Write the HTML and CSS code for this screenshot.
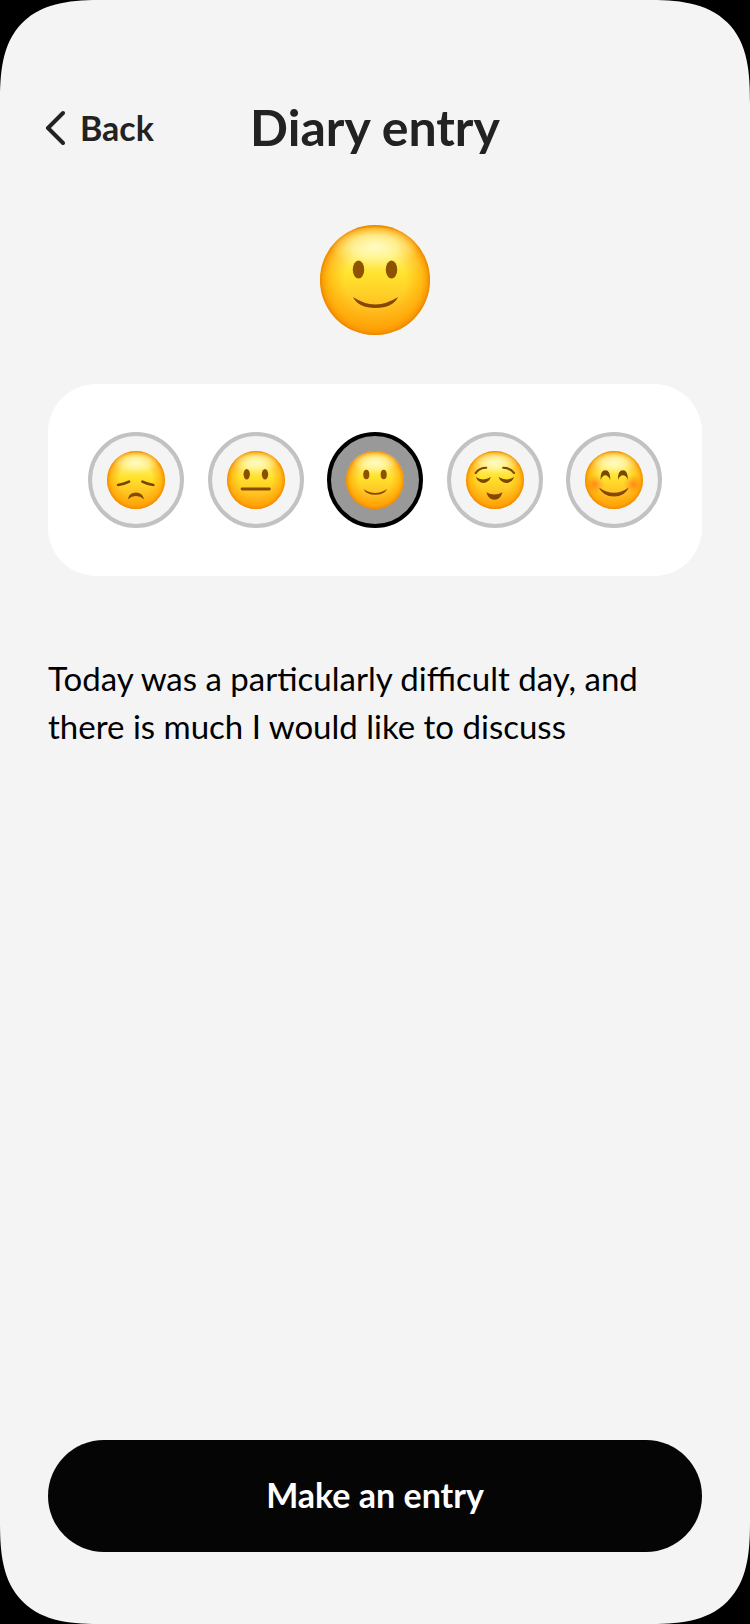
FILE: index.html
```
<!DOCTYPE html>
<html lang="en">
<head>
    <meta charset="UTF-8">
    <meta name="viewport" content="width=device-width, initial-scale=1.0">
    <title>Diary entry</title>
    <link rel="stylesheet" href="styles.css">
</head>
<body>
    <!-- Shared emoji shapes -->
    <svg class="sprite" aria-hidden="true">
        <defs>
            <linearGradient id="skin" x1="0" y1="0" x2="0" y2="1">
                <stop offset="0" stop-color="#ffe45c"/>
                <stop offset="0.12" stop-color="#fff6a0"/>
                <stop offset="0.45" stop-color="#ffe32e"/>
                <stop offset="0.75" stop-color="#ffc022"/>
                <stop offset="1" stop-color="#ffa010"/>
            </linearGradient>
            <radialGradient id="rim">
                <stop offset="0.55" stop-color="#ffa800" stop-opacity="0"/>
                <stop offset="0.85" stop-color="#ffa400" stop-opacity="0.6"/>
                <stop offset="0.95" stop-color="#f99400" stop-opacity="0.85"/>
                <stop offset="1" stop-color="#e88400" stop-opacity="1"/>
            </radialGradient>
            <radialGradient id="shine" cx="0.5" cy="0.45" r="0.5">
                <stop offset="0" stop-color="#fffbc8" stop-opacity="0.95"/>
                <stop offset="0.5" stop-color="#fff9a8" stop-opacity="0.7"/>
                <stop offset="1" stop-color="#fff27a" stop-opacity="0"/>
            </radialGradient>
            <radialGradient id="blush">
                <stop offset="0" stop-color="#ff6a14" stop-opacity="0.65"/>
                <stop offset="1" stop-color="#ff7a14" stop-opacity="0"/>
            </radialGradient>
            <g id="face">
                <circle cx="50" cy="50" r="50" fill="url(#skin)"/>
                <circle cx="50" cy="50" r="50" fill="url(#rim)"/>
                <ellipse cx="50" cy="22" rx="40" ry="20" fill="url(#shine)"/>
            </g>
            <symbol id="smile" viewBox="0 0 100 100">
                <use href="#face"/>
                <g fill="#8f5200">
                    <ellipse cx="35" cy="40.5" rx="5.2" ry="8.2"/>
                    <ellipse cx="65" cy="40.5" rx="5.2" ry="8.2"/>
                </g>
                <path d="M30 65.5Q50 79 71 65.5Q66 75.500 50.500 75.500Q35 75.500 30 65.500Z" fill="#864700"/>
            </symbol>
            <symbol id="sad" viewBox="0 0 100 100">
                <use href="#face"/>
                <path d="M19 58.500Q31 57 38 53M61 53Q68 57 80 58.500" fill="none" stroke="#7a4700" stroke-width="4.500" stroke-linecap="round"/>
                <path d="M36 83Q38 71.500 50 71.500Q61 71.500 64 83Q57 77.500 50 77.500T36 83Z" fill="#864700"/>
            </symbol>
            <symbol id="neutral" viewBox="0 0 100 100">
                <use href="#face"/>
                <g fill="#8a5200">
                    <ellipse cx="34" cy="40" rx="5.500" ry="9"/>
                    <ellipse cx="65.500" cy="40" rx="5.500" ry="9"/>
                </g>
                <path d="M26 65.500H73" stroke="#8a4c00" stroke-width="5" stroke-linecap="round"/>
            </symbol>
            <symbol id="relieved" viewBox="0 0 100 100">
                <use href="#face"/>
                <path d="M16.500 38Q23 29 35 29M64 29Q76 29 83 38" fill="none" stroke="#7a4700" stroke-width="3.500" stroke-linecap="round"/>
                <path d="M17 45Q29 53 43 45Q39 55 30 55Q21 55 17 45ZM56 45Q70 53 83 45Q79 55 70 55Q60 55 56 45Z" fill="#7a4700"/>
                <path d="M35 71Q49 79 63 71Q59 84 49 84Q39 84 35 71Z" fill="#864700"/>
            </symbol>
            <symbol id="happy" viewBox="0 0 100 100">
                <use href="#face"/>
                <circle cx="17" cy="57" r="17" fill="url(#blush)"/>
                <circle cx="83" cy="57" r="17" fill="url(#blush)"/>
                <path d="M27 50Q26 33 35 33Q44 33 43.500 50Q40 42 35 42Q30 42 27 50ZM57 50Q56 33 65.500 33Q74 33 74 50Q71 42 65.500 42Q60 42 57 50Z" fill="#7a4700"/>
                <path d="M24 63Q50 81 75.500 63Q69 78.500 50 78.500Q31 78.500 24 63Z" fill="#864700"/>
            </symbol>
        </defs>
    </svg>

    <div class="screen">
        <header class="header">
            <a class="back" href="#">
                <svg class="back-icon" viewBox="0 0 20 36" aria-hidden="true">
                    <path d="M18 3L3 18L18 33"/>
                </svg>
                Back
            </a>
            <h1>Diary entry</h1>
        </header>

        <form class="entry">
            <svg class="current-mood" role="img" aria-label="Slightly smiling"><use href="#smile"/></svg>

            <div class="moods" role="radiogroup" aria-label="Mood">
                <label class="mood">
                    <input type="radio" name="mood" value="sad" aria-label="Sad">
                    <svg><use href="#sad"/></svg>
                </label>
                <label class="mood">
                    <input type="radio" name="mood" value="neutral" aria-label="Neutral">
                    <svg><use href="#neutral"/></svg>
                </label>
                <label class="mood">
                    <input type="radio" name="mood" value="smile" aria-label="Good" checked>
                    <svg><use href="#smile"/></svg>
                </label>
                <label class="mood">
                    <input type="radio" name="mood" value="relieved" aria-label="Relieved">
                    <svg><use href="#relieved"/></svg>
                </label>
                <label class="mood">
                    <input type="radio" name="mood" value="happy" aria-label="Happy">
                    <svg><use href="#happy"/></svg>
                </label>
            </div>

            <textarea class="note" aria-label="Diary text">Today was a particularly difficult day, and there is much I would like to discuss</textarea>

            <button class="submit" type="submit">Make an entry</button>
        </form>
    </div>
</body>
</html>
```
FILE: styles.css
```
* {
    box-sizing: border-box;
}

body {
    margin: 0;
    background: #000;
    color: #222;
    font-family: Lato, "Liberation Sans", sans-serif;
}

.sprite {
    position: absolute;
    width: 0;
    height: 0;
}

.screen {
    display: flex;
    flex-direction: column;
    min-height: 100vh;
    padding: 96px 48px 72px;
    background: #f4f4f4;
    border-radius: 80px;
}

@supports (corner-shape: squircle) {
    .screen {
        border-radius: 104px;
        corner-shape: superellipse(1.5);
    }
}

.header {
    display: grid;
    grid-template-columns: 1fr auto 1fr;
    align-items: center;
    height: 64px;
}

.back {
    display: flex;
    align-items: center;
    gap: 15px;
    margin-left: -3px;
    color: inherit;
    font-size: 34px;
    line-height: 40px;
    font-weight: bold;
    text-decoration: none;
}

.back-icon {
    width: 20px;
    height: 36px;
    fill: none;
    stroke: #222;
    stroke-width: 4;
    stroke-linecap: round;
    stroke-linejoin: round;
}

h1 {
    margin: 0;
    padding-bottom: 2px;
    font-size: 50px;
    line-height: 62px;
    font-weight: bold;
}

.entry {
    display: flex;
    flex-direction: column;
    flex: 1;
}

.current-mood {
    align-self: center;
    width: 110px;
    height: 110px;
    margin: 65px 0 49px;
}

.moods {
    display: flex;
    justify-content: space-between;
    padding: 48px 40px;
    background: #fff;
    border-radius: 48px;
}

.mood {
    display: flex;
    align-items: center;
    justify-content: center;
    width: 96px;
    height: 96px;
    border: 4px solid #c2c2c2;
    border-radius: 50%;
    background: #f4f4f4;
    cursor: pointer;
}

.mood:has(input:checked) {
    border-color: #000;
    background: #999;
}

.mood input {
    position: absolute;
    opacity: 0;
}

.mood svg {
    width: 58px;
    height: 58px;
}

.note {
    flex: 1;
    margin: 78px 0 48px;
    padding: 0;
    border: none;
    outline: none;
    resize: none;
    background: none;
    color: #000;
    font-family: inherit;
    font-size: 33px;
    line-height: 48px;
}

.submit {
    height: 112px;
    padding-bottom: 4px;
    border: none;
    border-radius: 56px;
    background: #050505;
    color: #fff;
    font-family: inherit;
    font-size: 34px;
    font-weight: bold;
    cursor: pointer;
}
```
